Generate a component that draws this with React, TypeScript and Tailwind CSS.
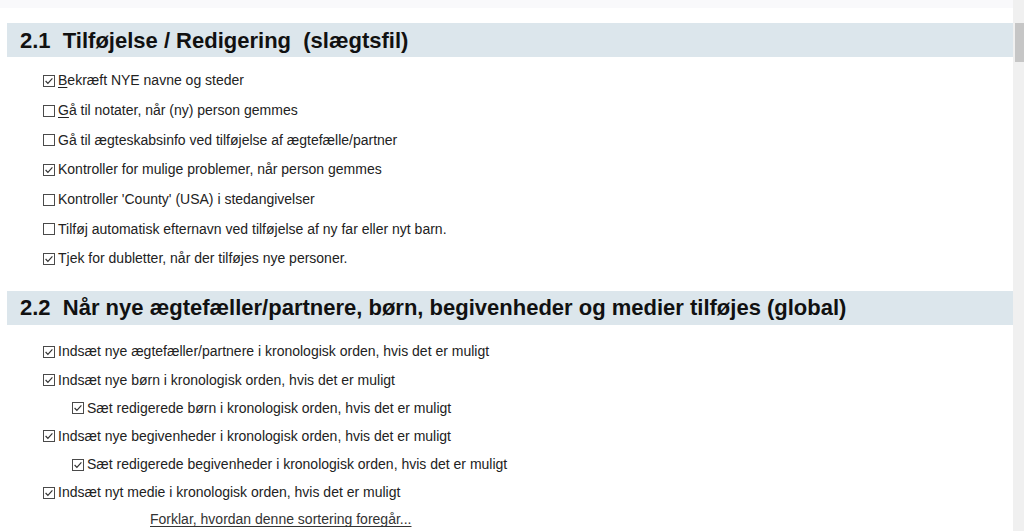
import React from "react"

type Item = { label: string; checked: boolean; indent?: boolean; mnemonic?: number }

const section1: Item[] = [
    { label: "Bekræft NYE navne og steder", checked: true, mnemonic: 0 },
    { label: "Gå til notater, når (ny) person gemmes", checked: false, mnemonic: 0 },
    { label: "Gå til ægteskabsinfo ved tilføjelse af ægtefælle/partner", checked: false },
    { label: "Kontroller for mulige problemer, når person gemmes", checked: true },
    { label: "Kontroller 'County' (USA) i stedangivelser", checked: false },
    { label: "Tilføj automatisk efternavn ved tilføjelse af ny far eller nyt barn.", checked: false },
    { label: "Tjek for dubletter, når der tilføjes nye personer.", checked: true },
]

const section2: Item[] = [
    { label: "Indsæt nye ægtefæller/partnere i kronologisk orden, hvis det er muligt", checked: true },
    { label: "Indsæt nye børn i kronologisk orden, hvis det er muligt", checked: true },
    { label: "Sæt redigerede børn i kronologisk orden, hvis det er muligt", checked: true, indent: true },
    { label: "Indsæt nye begivenheder i kronologisk orden, hvis det er muligt", checked: true },
    { label: "Sæt redigerede begivenheder i kronologisk orden, hvis det er muligt", checked: true, indent: true },
    { label: "Indsæt nyt medie i kronologisk orden, hvis det er muligt", checked: true },
]

function CheckBox({ checked }: { checked: boolean }) {
    return (
        <svg width="12" height="12" viewBox="0 0 12 12" className="shrink-0">
            <rect x="0.5" y="0.5" width="11" height="11" fill="white" stroke="#4a4a4a" strokeWidth="1" />
            {checked && (
                <polyline points="2.6,6 4.9,8.4 9.4,3.4" fill="none" stroke="#333" strokeWidth="1.2" />
            )}
        </svg>
    )
}

function Row({ item, height }: { item: Item; height: string }) {
    const label =
        item.mnemonic !== undefined ? (
            <>
                <span className="underline underline-offset-2">{item.label.charAt(0)}</span>
                {item.label.slice(1)}
            </>
        ) : (
            item.label
        )
    return (
        <div className={`flex items-center gap-[3px] ${height} ${item.indent ? "pl-[72px]" : "pl-[43px]"}`}>
            <CheckBox checked={item.checked} />
            <span>{label}</span>
        </div>
    )
}

function Heading({ children }: { children: React.ReactNode }) {
    return (
        <div className="ml-[7px] flex h-[34px] items-center bg-[#dce6ec] pl-[13px] text-[22px] font-bold text-[#111] whitespace-pre">
            {children}
        </div>
    )
}

export default function App() {
    return (
        <div
            className="flex h-[531px] w-[1024px] overflow-hidden bg-white text-[14px] text-[#222]"
            style={{ fontFamily: '"Liberation Sans", Arial, sans-serif' }}
        >
            <div className="flex-1">
                <div className="h-2 bg-[#f9f9fb]" />
                <div className="pt-[15px]">
                    <Heading>{"2.1  Tilføjelse / Redigering  (slægtsfil)"}</Heading>
                    <div className="pt-[9px]">
                        {section1.map((item) => (
                            <Row key={item.label} item={item} height="h-[29.7px]" />
                        ))}
                    </div>
                </div>
                <div className="pt-[17px]">
                    <Heading>{"2.2  Når nye ægtefæller/partnere, børn, begivenheder og medier tilføjes (global)"}</Heading>
                    <div className="pt-[13px]">
                        {section2.map((item) => (
                            <Row key={item.label} item={item} height="h-[28.2px]" />
                        ))}
                        <div className="flex h-[26px] items-center pl-[150px]">
                            <span className="text-[#333] underline underline-offset-2">Forklar, hvordan denne sortering foregår...</span>
                        </div>
                    </div>
                </div>
            </div>

            {/* scrollbar */}
            <div className="flex w-[11px] flex-col bg-[#f0f0f0]">
                <div className="h-[23px]" />
                <div className="ml-[2px] h-[39px] bg-[#c6c6c6]" />
            </div>
        </div>
    )
}
